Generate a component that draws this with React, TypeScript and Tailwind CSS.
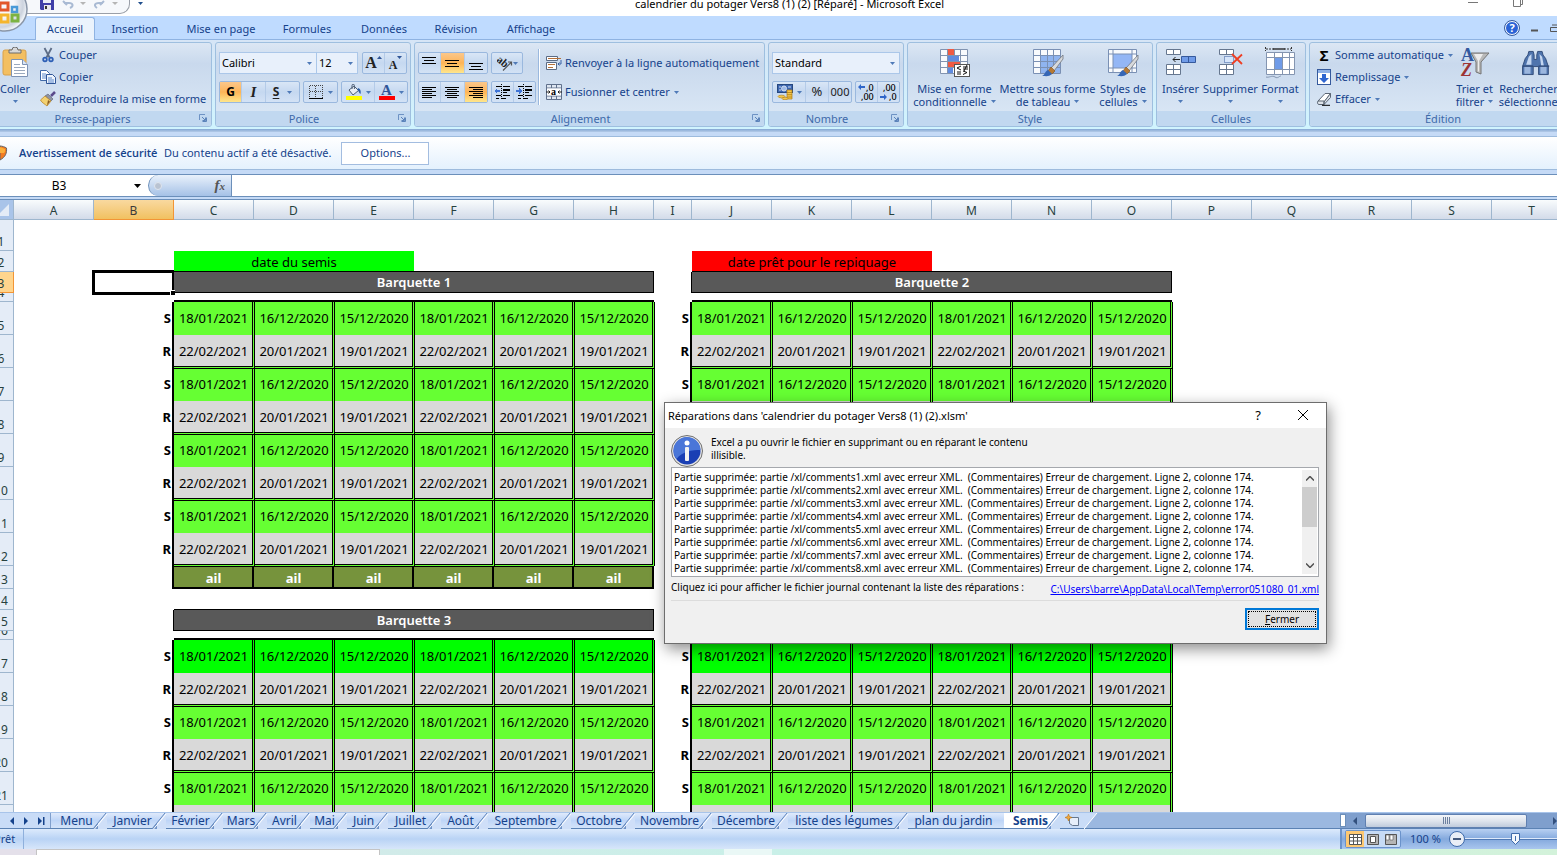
import type { ReactNode } from 'react';
import { clsx } from 'clsx';

const RIBBON_TABS = [
  { label: 'Accueil', width: 'w-[60px]', active: true },
  { label: 'Insertion', width: 'w-[80px]' },
  { label: 'Mise en page', width: 'w-[92px]' },
  { label: 'Formules', width: 'w-[80px]' },
  { label: 'Données', width: 'w-[74px]' },
  { label: 'Révision', width: 'w-[70px]' },
  { label: 'Affichage', width: 'w-[80px]' },
];

const SHEETS = [
  { label: 'Menu', width: 'w-[53px]' },
  { label: 'Janvier', width: 'w-[59px]' },
  { label: 'Février', width: 'w-[57px]' },
  { label: 'Mars', width: 'w-[44px]' },
  { label: 'Avril', width: 'w-[43px]' },
  { label: 'Mai', width: 'w-[37px]' },
  { label: 'Juin', width: 'w-[41px]' },
  { label: 'Juillet', width: 'w-[53px]' },
  { label: 'Août', width: 'w-[47px]' },
  { label: 'Septembre', width: 'w-[83px]' },
  { label: 'Octobre', width: 'w-[64px]' },
  { label: 'Novembre', width: 'w-[77px]' },
  { label: 'Décembre', width: 'w-[76px]' },
  { label: 'liste des légumes', width: 'w-[120px]' },
  { label: 'plan du jardin', width: 'w-[99px]' },
];

const COLUMNS = 'ABCDEFGHIJKLMNOPQRST'.split('');

const SOWING = ['18/01/2021', '16/12/2020', '15/12/2020', '18/01/2021', '16/12/2020', '15/12/2020'];
const PRICKING = ['22/02/2021', '20/01/2021', '19/01/2021', '22/02/2021', '20/01/2021', '19/01/2021'];

type RowKind = 'blank' | 'legend' | 'title' | 'rule' | 'sow' | 'prick' | 'crop' | 'gap';
type Row = { n: number; kind: RowKind; first?: boolean; names?: [string, string] };

const ROWS: Row[] = [
  { n: 1, kind: 'blank' },
  { n: 2, kind: 'legend' },
  { n: 3, kind: 'title', names: ['Barquette 1', 'Barquette 2'] },
  { n: 4, kind: 'rule' },
  { n: 5, kind: 'sow', first: true },
  { n: 6, kind: 'prick' },
  { n: 7, kind: 'sow' },
  { n: 8, kind: 'prick' },
  { n: 9, kind: 'sow' },
  { n: 10, kind: 'prick' },
  { n: 11, kind: 'sow' },
  { n: 12, kind: 'prick' },
  { n: 13, kind: 'crop' },
  { n: 14, kind: 'gap' },
  { n: 15, kind: 'title', names: ['Barquette 3', 'Barquette 4'] },
  { n: 16, kind: 'rule' },
  { n: 17, kind: 'sow', first: true },
  { n: 18, kind: 'prick' },
  { n: 19, kind: 'sow' },
  { n: 20, kind: 'prick' },
  { n: 21, kind: 'sow' },
  { n: 22, kind: 'prick' },
];

const ROW_HEIGHT: Record<RowKind, string> = {
  blank: 'h-[31px]',
  legend: 'h-[21px]',
  title: 'h-[21px]',
  rule: 'h-[9px]',
  sow: 'h-[33px]',
  prick: 'h-[33px]',
  crop: 'h-[23px]',
  gap: 'h-[21px]',
};

/* ---------- small shared pieces ---------- */

function Arrow({ className = 'text-[#4f7ab8]' }: { className?: string }) {
  return (
    <svg viewBox="0 0 5 3" className={clsx('w-[5px] h-[3px] shrink-0', className)}>
      <path d="M0 0h5L2.5 3z" fill="currentColor" />
    </svg>
  );
}

function Launcher() {
  return (
    <svg viewBox="0 0 8 8" className="w-2 h-2">
      <path d="M.5 6V.5H6" fill="none" stroke="#6d92c4" />
      <path d="M3.500 7.500h4v-4M3 3l3 3M6.500 3.500v3h-3" fill="none" stroke="#5b83ba" />
    </svg>
  );
}

function Group({ label, width, launcher, children }: { label: string; width: string; launcher?: boolean; children: ReactNode }) {
  return (
    <section className={clsx('h-[85px] shrink-0 flex flex-col border border-[#9ebfdf] rounded-[3px] overflow-hidden bg-linear-to-b from-[#dce7f4] from-0% via-[#c9d9ed] via-25% to-[#dae7f5] to-90%', width)}>
      <div className="flex-1 min-h-0 flex">{children}</div>
      <div className={clsx('h-[15px] pt-px flex items-center justify-center relative bg-[#c1d8f0] text-[#3e6aaa]', launcher && 'pr-[18px]')}>
        <span>{label}</span>
        {launcher && (
          <button type="button" aria-label={`Options ${label}`} className="absolute right-1 top-[3px]">
            <Launcher />
          </button>
        )}
      </div>
    </section>
  );
}

function ButtonSet({ children, className }: { children: ReactNode; className?: string }) {
  return (
    <div className={clsx('h-[22px] flex border border-[#9ab8de] rounded-[2px] divide-x divide-[#b4cbe8] bg-linear-to-b from-[#d9e6f6] via-[#c5d8f0] to-[#d3e2f5]', className)}>
      {children}
    </div>
  );
}

function Tool({ label, on, className = 'w-[23px]', children }: { label: string; on?: boolean; className?: string; children: ReactNode }) {
  return (
    <button
      type="button"
      aria-label={label}
      aria-pressed={on}
      className={clsx('h-full flex items-center justify-center gap-1 text-[#222]', className, on && 'bg-linear-to-b from-[#fbc78a] via-[#fdb457] to-[#fee68c]')}
    >
      {children}
    </button>
  );
}

function Combo({ label, value, className }: { label: string; value: string; className: string }) {
  return (
    <div className={clsx('h-[22px] relative flex items-center border border-[#abc7e9] bg-[#e8f0fb]', className)}>
      <select aria-label={label} className="w-full h-full pl-[2px] appearance-none bg-transparent text-black outline-none">
        <option>{value}</option>
      </select>
      <Arrow className="absolute right-1 text-[#4f7ab8] pointer-events-none" />
    </div>
  );
}

function BigButton({ lines, width, icon }: { lines: [string, string?]; width: string; icon: ReactNode }) {
  return (
    <button type="button" className={clsx('shrink-0 flex flex-col items-center pt-1 leading-[13px] whitespace-nowrap text-[#15428b]', width)}>
      <span className="h-[34px]">{icon}</span>
      <span className="mt-px">{lines[0]}</span>
      <span className="h-[13px] flex items-center gap-1">
        {lines[1]}
        <Arrow />
      </span>
    </button>
  );
}

function SmallButton({ label, icon, arrow }: { label: string; icon: ReactNode; arrow?: boolean }) {
  return (
    <button type="button" className="h-[22px] flex items-center gap-[3px] whitespace-nowrap text-[#15428b]">
      <span className="w-4 flex justify-center">{icon}</span>
      {label}
      {arrow && <Arrow className="ml-px text-[#4f7ab8]" />}
    </button>
  );
}

/* Paragraph lines: [x, width] for each stroke */
function Lines({ rows, top = 0, step = 2 }: { rows: [number, number][]; top?: number; step?: number }) {
  return (
    <svg viewBox="0 0 15 15" className="w-[15px] h-[15px]" shapeRendering="crispEdges">
      {rows.map(([x, w], i) => (
        <rect key={i} x={x} y={top + i * step} width={w} height="1" fill="#000" />
      ))}
    </svg>
  );
}

/* ---------- icons ---------- */

function PasteIcon() {
  return (
    <svg viewBox="0 0 30 32" className="w-[30px] h-8">
      <rect x="3" y="3" width="23" height="25" rx="2" fill="#f3bf62" stroke="#d9a14a" />
      <path d="M9 6V3h3a3 3 0 0 1 6 0h3v3z" fill="#d8d8d8" stroke="#6c6c6c" />
      <path d="M11.500 12.500h11l5 5v12h-16z" fill="#fff" stroke="#7d93b5" />
      <path d="M22.500 12.500v5h5" fill="#dbe6f4" stroke="#7d93b5" />
      <path d="M14 17.500h6M14 20.500h11M14 23.500h11M14 26.500h11" stroke="#9aa9be" />
    </svg>
  );
}

function ScissorsIcon() {
  return (
    <svg viewBox="0 0 16 16" className="w-4 h-4">
      <path d="M4.500 1l5 9.500M11.500 1L6.500 10.500" stroke="#5d6d86" strokeWidth="1.800" fill="none" />
      <circle cx="5" cy="12.500" r="1.800" fill="none" stroke="#2d5fb5" strokeWidth="1.800" />
      <circle cx="11" cy="12.500" r="1.800" fill="none" stroke="#2d5fb5" strokeWidth="1.800" />
    </svg>
  );
}

function CopyIcon() {
  return (
    <svg viewBox="0 0 16 16" className="w-4 h-4">
      <path d="M.5 1.500h6l3 3v7h-9z" fill="#fff" stroke="#4069a8" />
      <path d="M2 5h4M2 7h5M2 9h5" stroke="#5b88cc" />
      <path d="M6.500 5.500h6l3 3v6h-9z" fill="#eef4fc" stroke="#2f5597" />
      <path d="M8 9h4M8 11h6M8 13h6" stroke="#5b88cc" />
    </svg>
  );
}

function BrushIcon() {
  return (
    <svg viewBox="0 0 16 16" className="w-4 h-4">
      <path d="M15 1l-4 4" stroke="#5a4a8c" strokeWidth="2.500" />
      <path d="M8 3l5 5-2 2-6-5z" fill="#8d93a3" stroke="#555d70" strokeWidth=".6" />
      <path d="M5 5l6 5-4 5c-2-2-5-3-6.500-6z" fill="#f3d170" stroke="#b8872f" strokeWidth=".8" />
      <path d="M7 14.500l3-4-2-1.500z" fill="#8a5b22" />
    </svg>
  );
}

function BordersIcon() {
  return (
    <svg viewBox="0 0 14 14" className="w-[14px] h-[14px]" shapeRendering="crispEdges">
      <path d="M.5 .5h13v12M.5 .5v12M.5 6.500h13M6.500 .5v12" stroke="#444" strokeDasharray="1 1" fill="none" />
      <path d="M0 13.500h14" stroke="#000" />
    </svg>
  );
}

function BucketIcon() {
  return (
    <svg viewBox="0 0 16 16" className="w-4 h-4">
      <path d="M3 6l5-4 4.500 4.500L7 11z" fill="#e8eef6" stroke="#4d5d73" />
      <path d="M6 5V1.500a1.200 1.200 0 0 1 2.400 0V5" fill="none" stroke="#4d5d73" />
      <path d="M12 4c3 1 3 4 2.500 6-1.500-.5-1.500-3-3-4z" fill="#2c5fa8" />
      <rect y="12" width="16" height="4" fill="#ff0" />
    </svg>
  );
}

function FontColorIcon() {
  return (
    <span className="w-4 flex flex-col items-center">
      <span className="font-['Liberation_Serif',serif] font-bold text-[15px] leading-[12px] text-[#2f5597]">A</span>
      <span className="w-4 h-1 bg-[#f00]" />
    </span>
  );
}

function OrientationIcon() {
  return (
    <svg viewBox="0 0 16 16" className="w-4 h-4">
      <text x="0" y="9" transform="rotate(40 4 6)" fontSize="11" fontWeight="700" fontFamily="Liberation Serif, serif" fill="#222">ab</text>
      <path d="M6 15.500L14.500 7M11 7h3.500v3.500" stroke="#555" fill="none" strokeWidth="1.200" />
    </svg>
  );
}

function IndentIcon({ out }: { out?: boolean }) {
  return (
    <svg viewBox="0 0 17 16" className="w-[17px] h-4" shapeRendering="crispEdges">
      <path d="M2 2.500h5M9 2.500h7M9 5.500h7M9 8.500h4M2 11.500h5M9 11.500h7M2 14.500h3M8 14.500h4" stroke="#000" />
      <path d="M9 5h7v2H9z" fill="#000" />
      <path d="M7.500 0v16" stroke="#000" strokeDasharray="1 1" />
      <path d={out ? 'M0 7l3-3v2h3v2H3v2z' : 'M6 7L3 4v2H0v2h3v2z'} fill="#3f74d6" />
    </svg>
  );
}

function WrapIcon() {
  return (
    <svg viewBox="0 0 16 16" className="w-4 h-4">
      <path d="M.5 1.500h11v4H.5zM.5 7.500h10v7H.5z" fill="#fff" stroke="#5a6b85" />
      <path d="M2 3.500h13M2 9.500h7M2 12.500h5" stroke="#b5713a" strokeWidth="1.200" />
      <path d="M15 5v4h-3M13.500 7.500L12 9l1.500 1.500" stroke="#3b63a5" fill="none" />
    </svg>
  );
}

function MergeIcon() {
  return (
    <svg viewBox="0 0 16 16" className="w-4 h-4">
      <path d="M.5 .5h15v15H.5zM.5 4h15M.5 12h15M5.500 .5V4M10.500 .5V4M5.500 12v3.500M10.500 12v3.500" fill="#dfe7f2" stroke="#60718c" />
      <rect x="1" y="4.500" width="14" height="7" fill="#fff" />
      <path d="M0 8h4M12 8h4M2.500 6.500L4 8 2.500 9.500M13.500 6.500L12 8l1.500 1.500" stroke="#222" fill="none" />
      <text x="5" y="11" fontSize="10" fontWeight="700" fontFamily="Liberation Serif, serif">a</text>
    </svg>
  );
}

function CurrencyIcon() {
  return (
    <svg viewBox="0 0 16 16" className="w-4 h-4">
      <rect x=".5" y=".5" width="15" height="8" fill="#3c66b0" stroke="#26477f" />
      <circle cx="7" cy="4.500" r="2.500" fill="#9db9e6" stroke="#cfdcf2" />
      <path d="M2 3h2M11 3h3M2 6h2" stroke="#cfdcf2" />
      <path d="M10 6h5v9h-5z" fill="#f3c74b" stroke="#b07d16" strokeWidth=".7" />
      <path d="M10 8.500h5M10 10.700h5M10 13h5" stroke="#b07d16" strokeWidth=".8" />
      <ellipse cx="4.500" cy="12.500" rx="3.500" ry="1.300" fill="#f3c74b" stroke="#b07d16" strokeWidth=".6" />
      <ellipse cx="8" cy="14.500" rx="3" ry="1.200" fill="#f3c74b" stroke="#b07d16" strokeWidth=".6" />
    </svg>
  );
}

function DecimalIcon({ more }: { more?: boolean }) {
  return (
    <svg viewBox="0 0 18 18" className="w-[18px] h-[18px]">
      <text x={more ? 8 : 3} y="8" fontSize="9" fontFamily="Noto Sans, sans-serif" fontWeight="500">{more ? ',0' : ',00'}</text>
      <text x={more ? 3 : 9} y="17" fontSize="9" fontFamily="Noto Sans, sans-serif" fontWeight="500">{more ? ',00' : ',0'}</text>
      <path d={more ? 'M0 4l3-3v2h4v2H3v2z' : 'M7 14l-3-3v2H0v2h4v2z'} fill="#2f66c9" />
    </svg>
  );
}

function PaintBrush() {
  return (
    <g>
      <path d="M31 8l-12 13 3 3L31 12z" fill="#d7d9dc" stroke="#71767e" strokeWidth=".8" />
      <path d="M19 20l4 4-3 3-4-3z" fill="#b67a35" stroke="#80521d" strokeWidth=".6" />
      <path d="M16 23l4 4c-3 3-6 2-10 2 3-1 3-5 6-6z" fill="#3566b5" />
    </g>
  );
}

function ConditionalIcon() {
  return (
    <svg viewBox="0 0 32 32" className="w-8 h-8">
      <path d="M1.500 2.500h27v24h-27z" fill="#f8fafd" stroke="#8193b0" />
      <path d="M8 2h7v6H8zM8 14h13v6H8z" fill="#ef5a43" />
      <path d="M8 8h12v6H8zM8 20h6v6H8z" fill="#5f8be0" />
      <path d="M1.500 8.500h27M1.500 14.500h27M1.500 20.500h27M8.500 2.500v24M15.500 2.500v6M21.500 2.500v24" stroke="#8193b0" fill="none" />
      <rect x="15.500" y="17.500" width="15" height="12" fill="#fff" stroke="#555" />
      <path d="M22 19l-4 2 4 2M18 25h4M18 27h4M24 20h5M24 22h5M28 18l-3 6M24 24l4 1.500-4 2" stroke="#111" fill="none" />
    </svg>
  );
}

function TableStyleIcon() {
  return (
    <svg viewBox="0 0 32 32" className="w-8 h-8">
      <path d="M1.500 2.500h27v24h-27z" fill="#f8fafd" />
      <path d="M8 8h21v18H8z" fill="#8fb4f0" />
      <path d="M1.500 2.500h27v24h-27zM1.500 8.500h27M1.500 14.500h27M1.500 20.500h27M8.500 2.500v24M15.500 2.500v24M21.500 2.500v24" fill="none" stroke="#7a90b4" />
      <PaintBrush />
    </svg>
  );
}

function CellStyleIcon() {
  return (
    <svg viewBox="0 0 32 32" className="w-8 h-8">
      <path d="M1.500 2.500h28v23h-28z" fill="#f8fafd" stroke="#7a90b4" />
      <path d="M6 7h19v14H6z" fill="#93b6f5" />
      <path d="M1.500 7h28M1.500 21h28M6 2.500v23M25 2.500v23" stroke="#7a90b4" />
      <PaintBrush />
    </svg>
  );
}

function InsertIcon() {
  return (
    <svg viewBox="0 0 32 32" className="w-8 h-8" fill="#fff" stroke="#66778f">
      <path d="M1.500 2.500h14v5h-14zM8.500 2.500v5M1.500 17.500h14v10h-14zM1.500 22.500h14M8.500 17.500v10" />
      <path d="M16.500 9.500h14v6h-14zM23.500 9.500v6" fill="#6f9be8" stroke="#35599c" />
      <path d="M15 12.500H8M10.500 10L8 12.500l2.500 2.500" fill="none" stroke="#222" />
    </svg>
  );
}

function DeleteIcon() {
  return (
    <svg viewBox="0 0 32 32" className="w-8 h-8" fill="#fff" stroke="#66778f">
      <path d="M4.500 2.500h14v5h-14zM11.500 2.500v5M4.500 17.500h14v10h-14zM4.500 22.500h14M11.500 17.500v10" />
      <path d="M9.500 9.500h9v6h-9z" fill="#d6e5fa" stroke="#35599c" strokeDasharray="1 1" />
      <path d="M17 7l10 10M27 7.500L17 17" stroke="#ee3f24" strokeWidth="1.800" />
    </svg>
  );
}

function FormatIcon() {
  return (
    <svg viewBox="0 0 32 32" className="w-8 h-8" fill="none">
      <path d="M1.500 0v4M27.500 0v4M2 2h8M20 2h7" stroke="#333" strokeDasharray="2 1" />
      <path d="M9 2h12" stroke="#333" strokeWidth="1.500" />
      <path d="M2.500 5.500h28v22h-28z" fill="#fff" />
      <path d="M11 11h8v11h-8z" fill="#6f9be8" />
      <path d="M2.500 5.500h28v22h-28zM2.500 10.500h28M2.500 22.500h28M10.500 5.500v22M18.500 5.500v22M25.500 5.500v22" stroke="#8495b0" />
      <path d="M2 30c3 1 6-2 9 0s4-1 6-1" stroke="#8495b0" />
    </svg>
  );
}

function FillIcon() {
  return (
    <svg viewBox="0 0 14 16" className="w-[14px] h-4">
      <rect x=".5" y=".5" width="13" height="15" fill="#fff" stroke="#35599c" />
      <rect x="1" y="1" width="12" height="3" fill="#8fb1e6" />
      <path d="M5 5h4v4h3l-5 5-5-5h3z" fill="#2f66d0" />
    </svg>
  );
}

function EraserIcon() {
  return (
    <svg viewBox="0 0 16 14" className="w-4 h-[14px]">
      <path d="M2 9l7-7.500h5.500L8 10z" fill="#fff" stroke="#5b6675" />
      <path d="M2 9h6v3.500H3c-1.500 0-2-2-1-3.500zM8 10l6.500-8.500v4L8 12.500z" fill="#dfe4ea" stroke="#5b6675" />
      <path d="M6 13.300h8" stroke="#000" />
    </svg>
  );
}

function SortIcon() {
  return (
    <svg viewBox="0 0 30 32" className="w-[30px] h-8">
      <path d="M11 6h18l-8 9v12l-5-2V15z" fill="#b9b9b9" stroke="#757575" />
      <path d="M14 7h9l-4 7v11l-1-1V14z" fill="#ececec" />
      <text x="1" y="14" fontSize="18" fontWeight="700" fontFamily="Liberation Serif, serif" fill="#34599f">A</text>
      <text x="1" y="29" fontSize="18" fontWeight="700" fontStyle="italic" fontFamily="Liberation Serif, serif" fill="#9c3434">Z</text>
    </svg>
  );
}

function BinocularsIcon() {
  return (
    <svg viewBox="-2 -3 36 36" className="w-8 h-8">
      <path d="M5 10l3-4 1-4h5l1 4v5h3V6l1-4h5l1 4 3 4 3 9v9H20v-9h-6v9H2v-9z" fill="#4f74ad" stroke="#2c4674" />
      <path d="M4 19h7v8H4zM22 19h7v8h-7z" fill="#9bb6de" />
      <path d="M9 8l3-3v12H6zM21 5l2 13h3l-2-10z" fill="#c4d6f0" />
      <path d="M2 18.500h12M20 18.500h12" stroke="#2c4674" strokeWidth="1.500" />
    </svg>
  );
}

function InfoIcon() {
  return (
    <svg viewBox="0 0 32 32" className="w-8 h-8 shrink-0">
      <circle cx="16" cy="16" r="15.500" fill="#e3e3e3" stroke="#707070" />
      <circle cx="16" cy="16" r="13.500" fill="#1a3fb4" />
      <path d="M2.500 16a13.500 13.500 0 0 1 27-1c-8 0-18 1-24 9a13 13 0 0 1-3-8z" fill="#4a76d8" />
      <circle cx="16" cy="8" r="2.500" fill="#fff" />
      <rect x="14" y="12" width="4" height="14" rx="1" fill="#f2f2f2" />
    </svg>
  );
}

function OfficeButton() {
  return (
    <svg viewBox="0 0 48 48" className="w-12 h-12">
      <defs>
        <radialGradient id="orb" cx=".4" cy=".4" r=".6">
          <stop offset=".5" stopColor="#f7f7fa" />
          <stop offset=".85" stopColor="#ccd3de" />
          <stop offset="1" stopColor="#eef2f7" />
        </radialGradient>
      </defs>
      <circle cx="24" cy="24" r="22" fill="url(#orb)" stroke="#8a96a8" strokeWidth="1.500" />
      <g fill="none" strokeWidth="3">
        <rect x="19" y="18" width="8" height="7" stroke="#e2562a" />
        <rect x="31" y="22" width="5" height="5" stroke="#4a9ad8" strokeWidth="2.500" />
        <rect x="20" y="30" width="7" height="7" stroke="#f5b52c" />
        <rect x="31" y="30" width="6" height="6" stroke="#7cb342" />
      </g>
    </svg>
  );
}

/* ---------- window areas ---------- */

function TitleBar() {
  return (
    <header className="h-4 relative flex bg-white text-black">
      <div className="w-[130px] h-[14px] pl-[40px] flex items-start gap-2 bg-[#f6f8fb] border-b border-r border-[#9a9fa8] rounded-br-[10px] overflow-hidden">
        <svg viewBox="0 0 14 10" className="w-[14px] h-[10px]">
          <path d="M0 0h14v10H1L0 9z" fill="#3f3fa8" />
          <path d="M3 0h8v3H3z" fill="#e8ecf8" />
          <path d="M4 5h7v5H4z" fill="#e8e8ee" />
          <path d="M5 6h2v3H5z" fill="#333" />
        </svg>
        <svg viewBox="0 0 24 9" className="w-6 h-[9px]" fill="none" stroke="#a9bad3" strokeWidth="2">
          <path d="M1 1l4 4M2 3h5c4 0 5 3 1 5" />
          <path d="M18 2h6l-3 3z" fill="#b5b5b5" stroke="none" />
        </svg>
        <svg viewBox="0 0 24 9" className="w-6 h-[9px]" fill="none" stroke="#a9bad3" strokeWidth="2">
          <path d="M10 1L6 5M9 3H5C0 3 0 6 3 8" />
          <path d="M18 2h6l-3 3z" fill="#b5b5b5" stroke="none" />
        </svg>
      </div>
      <div className="pl-2 pt-[2px]">
        <Arrow className="text-[#1f4e8c]" />
      </div>
      <h1 className="absolute inset-x-0 -top-1 text-center leading-4 pl-[22px]">calendrier du potager Vers8 (1) (2) [Réparé] - Microsoft Excel</h1>
      <div className="ml-auto pr-[34px] flex gap-[35px]">
        <svg viewBox="0 0 10 8" className="w-[10px] h-2"><path d="M0 2.500h10" stroke="#777" /></svg>
        <svg viewBox="0 0 10 8" className="w-[10px] h-2"><path d="M.5 0v6.500h7V0M9.500 0v4.500h-2" fill="none" stroke="#777" /></svg>
      </div>
    </header>
  );
}

function RibbonTabs() {
  return (
    <nav className="h-6 pl-[35px] flex items-end bg-[#bfdbff] border-b border-[#8fb3e2] text-[#15428b]">
      {RIBBON_TABS.map((tab) => (
        <button
          key={tab.label}
          type="button"
          className={clsx('text-center whitespace-nowrap', tab.width, tab.active ? 'h-[23px] bg-[#ebf3fc] border border-b-0 border-[#8fb3e2] rounded-t-[3px] -mb-px' : 'h-[21px] pt-px')}
        >
          {tab.label}
        </button>
      ))}
      <div className="ml-auto h-full flex items-center gap-3">
        <button type="button" aria-label="Aide" className="w-[14px] h-[14px] rounded-full border border-white outline outline-[#35599c] bg-[#2a62d6] text-white font-bold leading-[12px]">?</button>
        <svg viewBox="0 0 7 8" className="w-[7px] h-2"><path d="M0 6.500h7" stroke="#555" strokeWidth="2" /></svg>
        <svg viewBox="0 0 7 8" className="w-[7px] h-2"><path d="M2 1h7M.5 3.500h9v4h-9z" fill="none" stroke="#555" /></svg>
      </div>
    </nav>
  );
}

function Ribbon() {
  return (
    <div className="h-[96px] -ml-[9px] pt-[2px] flex flex-col bg-linear-to-b from-[#d6e5f6] to-[#d0f4fe] to-90% overflow-hidden">
      <div className="flex gap-[3px]">
        <Group label="Presse-papiers" width="w-[221px]" launcher>
          <div className="w-2 shrink-0" />
          <BigButton lines={['Coller']} width="w-[30px]" icon={<PasteIcon />} />
          <div className="pl-[10px] pt-px">
            <SmallButton label="Couper" icon={<ScissorsIcon />} />
            <SmallButton label="Copier" icon={<CopyIcon />} />
            <SmallButton label="Reproduire la mise en forme" icon={<BrushIcon />} />
          </div>
        </Group>

        <Group label="Police" width="w-[196px]" launcher>
          <div className="pl-[3px] pt-[9px] flex flex-col gap-[7px]">
            <div className="flex">
              <Combo label="Police" value="Calibri" className="w-[98px]" />
              <Combo label="Taille" value="12" className="w-[42px] -ml-px" />
              <ButtonSet className="ml-1">
                <Tool label="Agrandir la police" className="w-[22px]">
                  <span className="font-['Liberation_Serif',serif] font-bold text-[16px]">A</span>
                  <Arrow className="-ml-1 mb-3 rotate-180 text-[#2f5597]" />
                </Tool>
                <Tool label="Réduire la police" className="w-[21px]">
                  <span className="font-['Liberation_Serif',serif] font-bold text-[12px] pt-1">A</span>
                  <Arrow className="-ml-1 mb-3 text-[#2f5597]" />
                </Tool>
              </ButtonSet>
            </div>
            <div className="flex gap-[3px]">
              <ButtonSet>
                <Tool label="Gras" on className="w-[22px]"><b className="text-[12px] text-black">G</b></Tool>
                <Tool label="Italique" className="w-[24px]"><i className="font-['Liberation_Serif',serif] font-bold text-[15px]">I</i></Tool>
                <Tool label="Souligné" className="w-[33px]">
                  <b className="text-[12px] underline underline-offset-2 mr-1">S</b>
                  <Arrow />
                </Tool>
              </ButtonSet>
              <ButtonSet><Tool label="Bordures" className="w-[33px]"><BordersIcon /><Arrow className="ml-px text-[#4f7ab8]" /></Tool></ButtonSet>
              <ButtonSet>
                <Tool label="Remplissage" className="w-[33px]"><BucketIcon /><Arrow /></Tool>
                <Tool label="Couleur de police" className="w-[32px]"><FontColorIcon /><Arrow /></Tool>
              </ButtonSet>
            </div>
          </div>
        </Group>

        <Group label="Alignement" width="w-[351px]" launcher>
          <div className="pl-[3px] pt-[9px] w-[121px] shrink-0 flex flex-col gap-[7px]">
            <div className="flex gap-[3px]">
              <ButtonSet>
                <Tool label="Aligner en haut" className="w-[22px]"><Lines top={1} step={3} rows={[[0, 14], [2, 10], [0, 14]]} /></Tool>
                <Tool label="Aligner au centre" on className="w-[24px]"><Lines top={4} step={3} rows={[[0, 14], [2, 10], [0, 14]]} /></Tool>
                <Tool label="Aligner en bas" className="w-[22px]"><Lines top={7} step={3} rows={[[0, 14], [2, 10], [0, 14]]} /></Tool>
              </ButtonSet>
              <ButtonSet><Tool label="Orientation" className="w-[30px]"><OrientationIcon /><Arrow className="-ml-1 text-[#4f7ab8]" /></Tool></ButtonSet>
            </div>
            <div className="flex gap-[3px]">
              <ButtonSet>
                <Tool label="Aligner à gauche" className="w-[22px]"><Lines top={2} rows={[[0, 14], [0, 10], [0, 14], [0, 10], [0, 14], [0, 10]]} /></Tool>
                <Tool label="Centrer" className="w-[24px]"><Lines top={2} rows={[[0, 14], [2, 10], [0, 14], [2, 10], [0, 14], [2, 10]]} /></Tool>
                <Tool label="Aligner à droite" on className="w-[22px]"><Lines top={2} rows={[[0, 14], [4, 10], [0, 14], [4, 10], [0, 14], [4, 10]]} /></Tool>
              </ButtonSet>
              <ButtonSet>
                <Tool label="Diminuer le retrait" className="w-[22px]"><IndentIcon out /></Tool>
                <Tool label="Augmenter le retrait" className="w-[21px]"><IndentIcon /></Tool>
              </ButtonSet>
            </div>
          </div>
          <div className="ml-[2px] my-[6px] w-[2px] border-l border-[#9ab8de] bg-white" />
          <div className="pl-[6px] pt-[9px] flex flex-col gap-[7px]">
            <SmallButton label="Renvoyer à la ligne automatiquement" icon={<WrapIcon />} />
            <SmallButton label="Fusionner et centrer" icon={<MergeIcon />} arrow />
          </div>
        </Group>

        <Group label="Nombre" width="w-[136px]" launcher>
          <div className="pl-[3px] pt-[9px] flex flex-col gap-[7px]">
            <Combo label="Format de nombre" value="Standard" className="w-[128px]" />
            <div className="flex gap-[3px]">
              <ButtonSet>
                <Tool label="Format comptabilité" className="w-[33px]"><CurrencyIcon /><Arrow /></Tool>
                <Tool label="Pourcentage"><span className="text-[13px]">%</span></Tool>
                <Tool label="Séparateur de milliers" className="w-[22px]"><span className="text-[11px]">000</span></Tool>
              </ButtonSet>
              <ButtonSet>
                <Tool label="Ajouter une décimale" className="w-[22px]"><DecimalIcon more /></Tool>
                <Tool label="Réduire les décimales" className="w-[21px]"><DecimalIcon /></Tool>
              </ButtonSet>
            </div>
          </div>
        </Group>

        <Group label="Style" width="w-[246px]">
          <BigButton lines={['Mise en forme', 'conditionnelle']} width="w-[93px]" icon={<ConditionalIcon />} />
          <BigButton lines={['Mettre sous forme', 'de tableau']} width="w-[93px]" icon={<TableStyleIcon />} />
          <BigButton lines={['Styles de', 'cellules']} width="w-[58px]" icon={<CellStyleIcon />} />
        </Group>

        <Group label="Cellules" width="w-[150px]">
          <BigButton lines={['Insérer']} width="w-[47px]" icon={<InsertIcon />} />
          <BigButton lines={['Supprimer']} width="w-[53px]" icon={<DeleteIcon />} />
          <BigButton lines={['Format']} width="w-[46px]" icon={<FormatIcon />} />
        </Group>

        <Group label="Édition" width="w-[268px]">
          <div className="w-[143px] shrink-0 pl-[6px] pt-px">
            <SmallButton label="Somme automatique" icon={<b className="text-[15px] leading-4 text-black">Σ</b>} arrow />
            <SmallButton label="Remplissage" icon={<FillIcon />} arrow />
            <SmallButton label="Effacer" icon={<EraserIcon />} arrow />
          </div>
          <BigButton lines={['Trier et', 'filtrer']} width="w-[43px]" icon={<SortIcon />} />
          <BigButton lines={['Rechercher et', 'sélectionner']} width="w-[78px]" icon={<BinocularsIcon />} />
        </Group>
      </div>
      <div className="mt-[2px] h-[3px] bg-linear-to-b from-[#84a7d3] to-[#b4cbe8]" />
      <div className="flex-1 bg-[#c5daf6]" />
    </div>
  );
}

function SecurityBar() {
  return (
    <div className="h-[34px] pl-[19px] relative flex items-center border-y border-[#9dbbdd] bg-linear-to-b from-white to-[#e4f1fd] text-[#15428b]">
      <svg viewBox="0 0 8 16" className="absolute left-0 w-2 h-4">
        <path d="M0 1c2 0 5 1 6.500 2 .5 5-1 9-6.500 12z" fill="#f47b20" stroke="#666" />
        <path d="M0 2l5 2c0 2 0 3-1 4H0z" fill="#fbb03b" />
      </svg>
      <strong className="w-[145px] font-['Open_Sans','Noto_Sans',sans-serif] font-semibold whitespace-nowrap">Avertissement de sécurité</strong>
      <span>Du contenu actif a été désactivé.</span>
      <button type="button" className="ml-[10px] w-[88px] h-[23px] bg-white border border-[#a3bde0]">Options...</button>
    </div>
  );
}

function FormulaBar() {
  return (
    <div className="mt-1 h-[23px] flex border-y border-[#6b8fba] bg-white text-black">
      <div className="w-[148px] flex items-center">
        <input aria-label="Zone Nom" defaultValue="B3" className="w-[118px] text-center text-[12px] outline-none" />
        <svg viewBox="0 0 7 4" className="ml-4 w-[7px] h-1"><path d="M0 0h7L3.500 4z" /></svg>
      </div>
      <div className="w-[84px] flex items-center justify-between pl-[5px] pr-[6px] border-l border-r border-[#6b8fba] rounded-l-[11px] bg-linear-to-b from-[#e9f1fb] to-[#a5c1e6]">
        <span className="w-2 h-2 rounded-full bg-[#b9c3d2] border border-[#dfe5ee]" />
        <button type="button" aria-label="Insérer une fonction" className="font-['Liberation_Serif',serif] italic font-bold text-[15px] leading-4 text-[#555]">f<span className="text-[11px]">x</span></button>
      </div>
      <input aria-label="Barre de formule" className="flex-1 outline-none" />
    </div>
  );
}

function DateBlock({ row }: { row: Row }) {
  const sow = row.kind === 'sow';
  const dates = sow ? SOWING : PRICKING;
  return dates.map((date, i) => (
    <td
      key={i}
      className={clsx('p-0 pr-px border-black', i > 0 && 'border-l', sow && !row.first && 'border-t', sow && row.n === 17 ? 'bg-[#00ff00]' : 'bg-[#66ff33]')}
    >
      <div className={clsx('pl-px flex items-center justify-center border-r border-black', sow ? (row.first ? 'h-[33px]' : 'h-[32px]') : 'h-[32px] mb-px pt-[2px] border-b bg-[#d9d9d9]')}>
        {date}
      </div>
    </td>
  ));
}

function Block({ row, side }: { row: Row; side: 0 | 1 }) {
  switch (row.kind) {
    case 'legend':
      return (
        <>
          <td colSpan={3} className={clsx('p-0 pt-[2px] border-b border-black text-center leading-[18px]', side === 0 ? 'bg-[#00ff00]' : 'bg-[#ff0000]')}>
            {side === 0 ? 'date du semis' : 'date prêt pour le repiquage'}
          </td>
          <td colSpan={3} className="p-0 border-b border-black" />
        </>
      );
    case 'title':
      return <td colSpan={6} className="p-0 pl-px bg-[#595959] border-b border-r border-black text-center font-semibold text-white leading-[20px]">{row.names?.[side]}</td>;
    case 'rule':
      return <td colSpan={6} className="p-0 border-b-2 border-black" />;
    case 'gap':
      return <td colSpan={6} className="p-0 border-b border-black" />;
    case 'sow':
    case 'prick':
      return <DateBlock row={row} />;
    case 'crop':
      return SOWING.map((_, i) => (
        <td key={i} className="p-0 pt-px pl-px border-t border-r-2 border-b-2 border-black bg-[#76933c] text-center font-bold text-white leading-[18px]">ail</td>
      ));
    default:
      return <td colSpan={6} className="p-0" />;
  }
}

function SideCell({ row, selected, closes }: { row: Row; selected?: boolean; closes?: boolean }) {
  const dated = row.kind === 'sow' || row.kind === 'prick';
  const letter = row.kind === 'sow' ? 'S' : row.kind === 'prick' ? 'R' : '';
  return (
    <td className={clsx('p-0 relative border-black text-right font-bold', (dated || row.kind === 'crop') && 'border-r-2', row.kind === 'title' && 'border-r', closes && dated && 'border-l')}>
      {letter && <span className="pr-px">{letter}</span>}
      {selected && (
        <div className="absolute -left-[2px] -top-[2px] -right-px -bottom-[2px] border-[3px] border-r-2 border-black">
          <span className="absolute -right-[3px] -bottom-[3px] w-[5px] h-[5px] bg-black border-t border-l border-white" />
        </div>
      )}
    </td>
  );
}

function Sheet() {
  return (
    <main className="mt-[2px] flex-1 min-h-0 -ml-[14px] overflow-hidden bg-white border-t border-[#6b8fba] text-[13px] text-black">
      <table className="table-fixed w-[1586px] border-separate border-spacing-0">
        <colgroup>
          <col className="w-[28px]" />
          {COLUMNS.map((c) => (
            <col key={c} className={c === 'I' ? 'w-[38px]' : 'w-[80px]'} />
          ))}
        </colgroup>
        <thead>
          <tr className="h-5">
            <th className="p-0 bg-[#a9c4e9] border-r border-b border-[#9eb6ce]">
              <svg viewBox="0 0 26 18" className="w-[26px] h-[18px]"><path d="M23 3v12H11z" fill="#e4ecf7" /></svg>
            </th>
            {COLUMNS.map((c) => (
              <th
                key={c}
                scope="col"
                className={clsx(
                  'p-0 pt-[2px] font-normal text-[12px] leading-[17px] border-r border-b',
                  c === 'B' ? 'border-[#f29536] bg-linear-to-b from-[#f9d99f] to-[#f1c15f] text-[#3b3b3b]' : 'border-[#9eb6ce] bg-linear-to-b from-[#f9fcfd] to-[#d3dbe9] text-[#27413e]',
                )}
              >
                {c}
              </th>
            ))}
          </tr>
        </thead>
        <tbody>
          {ROWS.map((row) => (
            <tr key={row.n} className={ROW_HEIGHT[row.kind]}>
              <th
                scope="row"
                className={clsx('p-0 pl-[3px] align-bottom font-normal text-[12px] text-[#27413e] border-r border-b', row.n === 3 ? 'bg-[#ffd58d] border-[#f29536]' : 'bg-[#e4ecf7] border-[#9eb6ce]')}
              >
                <div className={clsx('flex items-end justify-center overflow-hidden leading-4', row.kind === 'rule' ? 'h-2' : 'h-4')}>{row.n}</div>
              </th>
              <td className="p-0" />
              <SideCell row={row} selected={row.n === 3} />
              <Block row={row} side={0} />
              <SideCell row={row} closes />
              <Block row={row} side={1} />
              <td colSpan={5} className={clsx('p-0 border-black', (row.kind === 'sow' || row.kind === 'prick') && 'border-l')} />
            </tr>
          ))}
        </tbody>
      </table>
    </main>
  );
}

function TabSlash({ active }: { active?: boolean }) {
  return (
    <svg viewBox="0 0 14 16" className="absolute -right-[3px] top-0 w-[14px] h-4 z-10">
      <path d="M0 16L13 0h1v16z" fill={active ? '#c9dcf7' : '#cfdff8'} />
      <path d="M0 16L5 10v6z" fill="#6f93c8" />
      <path d="M1.500 16L14 1" stroke="#fff" />
      <path d="M0 16L13 0" stroke="#6287bd" />
    </svg>
  );
}

function SheetTabs() {
  return (
    <div className="h-[17px] flex bg-[#9bb8e0] border-t border-[#a8c4ea] border-b border-b-[#5b82b4] text-[12px] leading-[15px] text-[#15428b]">
      <div className="w-[51px] shrink-0 flex items-center justify-end gap-2 pr-[5px] bg-[#c9dcf7] border-r border-[#7f9fcd]">
        <svg viewBox="0 0 36 8" className="w-9 h-2" fill="#15428b">
          <path d="M5 0v8L1 4zM15 0v8l4-4zM29 0v8l4-4zM34 0h1.500v8H34z" />
        </svg>
      </div>
      <div className="flex">
        {SHEETS.map((s) => (
          <button key={s.label} type="button" className={clsx('relative pr-[2px] text-center whitespace-nowrap bg-linear-to-b from-[#dfeafb] via-[#bed5f7] to-[#d3e3f9]', s.width)}>
            <span className="relative z-20">{s.label}</span>
            {s.label !== 'plan du jardin' && <TabSlash />}
          </button>
        ))}
        <button type="button" className="relative w-[53px] text-center font-bold bg-white">
          <span className="relative z-20">Semis</span>
          <TabSlash active />
        </button>
        <button type="button" aria-label="Insérer une feuille" className="relative w-[27px] pl-1 flex items-center justify-center bg-[#c9dcf7]">
          <svg viewBox="0 0 16 13" className="w-4 h-[13px] relative z-20">
            <path d="M4.500 3.500h9v8h-6l-3-2z" fill="#e6eefa" stroke="#66778f" />
            <path d="M3.500 0l1 2.500L7 3.500 4.500 4.500l-1 2.500-1-2.500L0 3.500l2.500-1z" fill="#f0a63c" stroke="#b57318" strokeWidth=".6" />
          </svg>
          <svg viewBox="0 0 14 16" className="absolute -right-[14px] top-0 w-[14px] h-4"><path d="M0 0h13L0 16z" fill="#c9dcf7" /><path d="M13 0L0 16" stroke="#fff" /></svg>
        </button>
      </div>
      <div className="ml-auto w-[217px] flex items-center bg-[#7f9fcd] text-[#33507e]">
        <div className="w-[6px] h-[13px] bg-white border border-[#6b8fba]" />
        <svg viewBox="0 0 4 8" className="ml-[7px] w-1 h-2" fill="currentColor"><path d="M4 0v8L0 4z" /></svg>
        <div className="ml-2 w-[162px] h-[14px] flex items-center justify-center gap-px border border-[#5f7fb0] rounded-[2px] bg-linear-to-b from-[#f3f6fa] via-[#dfe4ec] to-[#bfcbdc]">
          {[0, 1, 2, 3].map((i) => (
            <span key={i} className="w-px h-[7px] bg-[#6b7f9e]" />
          ))}
        </div>
        <svg viewBox="0 0 4 8" className="ml-auto w-1 h-2" fill="currentColor"><path d="M0 0v8l4-4z" /></svg>
      </div>
    </div>
  );
}

function StatusBar() {
  return (
    <footer className="h-5 flex bg-linear-to-b from-[#dceafc] via-[#b9d3f5] to-[#d7e6fa] leading-5 text-[#15428b]">
      <div className="w-6 border-r border-[#8fb0dc]">
        <span className="-ml-[6px]">Prêt</span>
      </div>
      <div className="ml-auto w-[217px] pl-[3px] flex items-center border-l-2 border-[#6b93cb] bg-linear-to-b from-[#b8d0f2] via-[#84a9dd] to-[#a9c6ee]">
        <div className="h-[18px] flex border border-[#6b93cb] rounded-[2px] bg-[#c7dbf5]">
          <button type="button" aria-label="Normal" className="w-[18px] flex items-center justify-center bg-[#fdc872]">
            <svg viewBox="0 0 13 11" className="w-[13px] h-[11px]"><path d="M.5 .5h12v10H.5zM.5 3.500h12M.5 7h12M4.500 .5v10M8.500 .5v10" fill="#fff" stroke="#555" /></svg>
          </button>
          <button type="button" aria-label="Mise en page" className="w-[18px] flex items-center justify-center">
            <svg viewBox="0 0 12 11" className="w-3 h-[11px]"><path d="M.5 .5h11v10H.5z" fill="#b5b5b5" stroke="#555" /><path d="M3.500 2.500h5v6h-5z" fill="#fff" stroke="#555" /></svg>
          </button>
          <button type="button" aria-label="Aperçu des sauts de page" className="w-[18px] flex items-center justify-center">
            <svg viewBox="0 0 12 11" className="w-3 h-[11px]"><path d="M.5 .5h11v10H.5z" fill="#b5b5b5" stroke="#555" /><path d="M1 1h3v5H1zM5 1h3v5H5z" fill="#fff" stroke="#555" strokeWidth=".6" /></svg>
          </button>
        </div>
        <span className="ml-[9px] whitespace-nowrap">100 %</span>
        <button type="button" aria-label="Zoom arrière" className="ml-2 w-4 h-4 shrink-0 flex items-center justify-center rounded-full border border-[#3e6aaa] bg-[#e9eef6]">
          <span className="w-2 h-[2px] bg-[#44597c]" />
        </button>
        <div className="relative flex-1 h-full">
          <svg viewBox="0 0 93 20" preserveAspectRatio="xMinYMid slice" className="w-full h-full">
            <path d="M0 9.500h93" stroke="#dfeafb" />
            <path d="M0 10.500h93" stroke="#5079b5" />
            <path d="M46.500 4.500h8v7l-4 4-4-4z" fill="#f3f7fd" stroke="#3e6aaa" />
            <path d="M50.500 7v5" stroke="#3e6aaa" />
          </svg>
          <input type="range" aria-label="Zoom" min="10" max="200" defaultValue="100" className="absolute inset-0 w-full h-full opacity-0" />
        </div>
      </div>
    </footer>
  );
}

function RepairDialog() {
  return (
    <div role="dialog" aria-labelledby="repair-title" className="absolute left-[664px] top-[402px] w-[663px] h-[242px] flex flex-col bg-[#f0f0f0] border border-[#6d6d6d] shadow-[2px_5px_14px_rgba(0,0,0,0.45)] text-[10px] leading-[13px] text-black">
      <div className="h-[25px] pl-[3px] pr-[18px] pb-px flex items-center bg-white text-[11px]">
        <h2 id="repair-title">Réparations dans 'calendrier du potager Vers8 (1) (2).xlsm'</h2>
        <button type="button" aria-label="Aide" className="ml-auto text-[13px]">?</button>
        <button type="button" aria-label="Fermer la fenêtre" className="ml-[37px]">
          <svg viewBox="0 0 10 10" className="w-[10px] h-[10px]"><path d="M0 0l10 10M10 0L0 10" stroke="#000" /></svg>
        </button>
      </div>
      <div className="pl-[6px] pr-[7px] flex flex-col">
        <div className="h-[39px] pt-[7px] flex gap-2">
          <InfoIcon />
          <p className="w-[330px] pt-px">Excel a pu ouvrir le fichier en supprimant ou en réparant le contenu illisible.</p>
        </div>
        <div className="h-[110px] pl-[2px] pr-px py-[2px] flex justify-between border border-[#a5a8ad] bg-white overflow-hidden">
          <ul className="pt-px whitespace-pre">
            {[1, 2, 3, 4, 5, 6, 7, 8].map((n) => (
              <li key={n}>{`Partie supprimée: partie /xl/comments${n}.xml avec erreur XML.  (Commentaires) Erreur de chargement. Ligne 2, colonne 174.`}</li>
            ))}
          </ul>
          <div className="w-[15px] flex flex-col items-center bg-[#f0f0f0]">
            <svg viewBox="0 0 8 5" className="my-[6px] w-2 h-[5px]"><path d="M0 4.500l4-4 4 4" fill="none" stroke="#505050" strokeWidth="1.500" /></svg>
            <div className="w-full h-10 bg-[#cdcdcd]" />
            <svg viewBox="0 0 8 5" className="mt-auto mb-[6px] w-2 h-[5px]"><path d="M0 .5l4 4 4-4" fill="none" stroke="#505050" strokeWidth="1.500" /></svg>
          </div>
        </div>
        <div className="h-[24px] pt-1 flex justify-between whitespace-nowrap border-b border-[#dcdcdc]">
          <span>Cliquez ici pour afficher le fichier journal contenant la liste des réparations :</span>
          <a href="#journal" className="pt-[2px] text-[#0000ff] underline">C:\Users\barre\AppData\Local\Temp\error051080_01.xml</a>
        </div>
        <button type="button" className="mt-[7px] self-end w-[74px] h-[22px] p-px border-2 border-[#0078d7] bg-[#e1e1e1]">
          <span className="h-full flex items-center justify-center border border-dotted border-black"><u>F</u>ermer</span>
        </button>
      </div>
    </div>
  );
}

export default function App() {
  return (
    <div className="relative h-screen flex flex-col overflow-hidden bg-[#c5daf6] font-['Noto_Sans','Open_Sans',sans-serif] text-[11px]">
      <TitleBar />
      <RibbonTabs />
      <div className="absolute -left-[19px] -top-[15px]">
        <OfficeButton />
      </div>
      <Ribbon />
      <SecurityBar />
      <FormulaBar />
      <Sheet />
      <SheetTabs />
      <StatusBar />
      <div className="h-[6px] flex bg-linear-to-r from-[#d9e6ea] via-[#c9f0e8] to-[#d3f2da]">
        <div className="w-9 bg-[#e4e0ea]" />
        <div className="w-[344px] border-t border-x border-[#c4c4c4] bg-white" />
        <div className="ml-[344px] w-12 bg-[#eaf8f6]" />
      </div>
      <RepairDialog />
    </div>
  );
}
